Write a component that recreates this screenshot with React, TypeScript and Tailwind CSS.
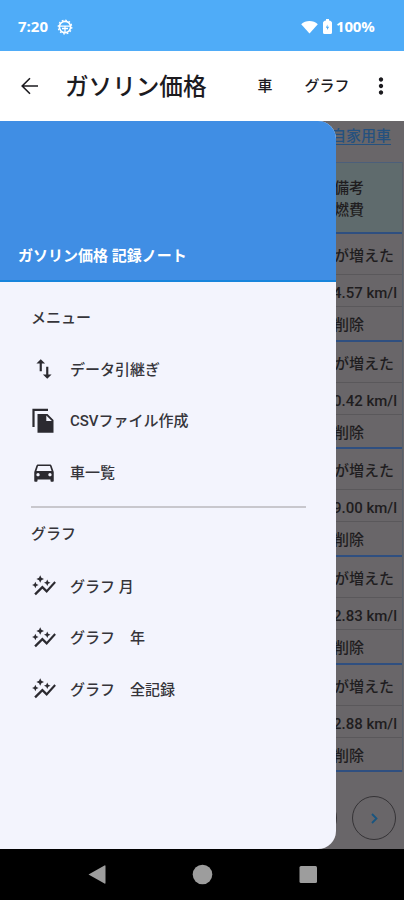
import React from 'react'
import { MdAutoGraph, MdDirectionsCar, MdImportExport, MdMoreVert } from 'react-icons/md'

type MenuItem = { label: string; icon: React.ComponentType<{ className?: string }> }

function CopyIcon({ className }: { className?: string }) {
  return (
    <svg className={className} viewBox="0 0 26 26">
      <path d="M2.500 19V1.800H17" fill="none" stroke="currentColor" strokeWidth="2.200" />
      <path fillRule="evenodd" d="M7 6h9.500l6 6v12.700H6.500V6zM15.300 7.500V13h5.600z" fill="currentColor" />
    </svg>
  )
}

const dataMenu: MenuItem[] = [
  { label: 'データ引継ぎ', icon: MdImportExport },
  { label: 'CSVファイル作成', icon: CopyIcon },
  { label: '車一覧', icon: MdDirectionsCar },
]

const graphMenu: MenuItem[] = [
  { label: 'グラフ 月', icon: MdAutoGraph },
  { label: 'グラフ　年', icon: MdAutoGraph },
  { label: 'グラフ　全記録', icon: MdAutoGraph },
]

const records = ['14.57', '10.42', '19.00', '12.83', '12.88']

function StatusBar() {
  return (
    <div className="h-[51px] shrink-0 bg-[#4facf8] text-white flex items-center pl-[18px] pr-[29px] pt-[2px] font-['Open_Sans','Roboto',sans-serif] font-bold">
      <span className="text-[15px] w-[39px]">7:20</span>
      <svg className="size-4" viewBox="0 0 16 16" fill="none" stroke="currentColor">
        <circle cx="8" cy="8" r="5.600" strokeWidth="1.600" />
        <circle cx="8" cy="8" r="6.800" strokeWidth="1.200" strokeDasharray="1.800 1.760" />
        <path d="M3 7.200h10M8 7v6M5 9.500h6" strokeWidth="1.300" />
      </svg>
      <svg className="ml-auto w-[17px] h-[14px]" viewBox="0 0 17 14" fill="currentColor">
        <path d="M8.500 13.500L.2 4.200C4.500 0 12.500 0 16.800 4.200z" />
      </svg>
      <svg className="ml-[5px] w-[9px] h-[15px]" viewBox="0 0 9 15">
        <path d="M3 0h3v1.500Q9 2 9 4v9.500Q9 15 7.500 15h-6Q0 15 0 13.500V4q0-2 3-2.500z" fill="currentColor" />
        <path d="M4.500 5.500L2.800 8.700h1.200V11l2.200-3.300H4.500z" fill="#4facf8" />
      </svg>
      <span className="ml-[4px] text-[15px] tracking-[-0.200px] w-[39px] whitespace-nowrap">100%</span>
    </div>
  )
}

function AppBar() {
  return (
    <header className="h-[70px] shrink-0 bg-white text-[#1c1b1f] flex items-center">
      <svg className="ml-[20px] size-5" viewBox="0 0 20 20" fill="none" stroke="currentColor" strokeWidth="1.600">
        <path d="M18 10H2.500M10 2.200L2.200 10l7.800 7.800" />
      </svg>
      <h1 className="ml-[25px] pt-[4px] text-[23.600px] font-medium whitespace-nowrap">ガソリン価格</h1>
      <span className="ml-[51px] text-[15px] font-medium pt-px">車</span>
      <span className="ml-[32px] text-[15px] font-medium pt-px">グラフ</span>
      <MdMoreVert className="ml-[18px] size-[26px]" />
    </header>
  )
}

function MenuRow({ label, icon: Icon }: MenuItem) {
  return (
    <li className="h-[51.700px] flex items-center pl-[31px]">
      <Icon className="size-[26px] text-[#2b2a30]" />
      <span className="ml-[13px] pt-[2px] text-[15px] font-medium whitespace-pre">{label}</span>
    </li>
  )
}

function Drawer() {
  return (
    <nav className="absolute left-0 top-0 w-[336px] h-full rounded-r-[18px] overflow-hidden bg-[#f3f4fd] text-[#35343a]">
      <div className="h-[161px] bg-[#408ee4] border-b-2 border-[#1784dc] text-white flex items-end pl-[18px] pb-[13px]">
        <h2 className="text-[15px] leading-[22px] font-bold">ガソリン価格 記録ノート</h2>
      </div>
      <p className="pl-[31px] pt-[24px] h-[61px] text-[15px] leading-6 font-medium">メニュー</p>
      <ul>
        {dataMenu.map((item) => <MenuRow key={item.label} {...item} />)}
      </ul>
      <hr className="ml-[31px] mr-[30px] mt-[8px] border-t-2 border-[#c8c7cd]" />
      <p className="pl-[31px] pt-[14px] h-[52px] text-[15px] leading-6 font-medium">グラフ</p>
      <ul>
        {graphMenu.map((item) => <MenuRow key={item.label} {...item} />)}
      </ul>
    </nav>
  )
}

function RecordTable() {
  return (
    <div className="h-full flex flex-col items-end bg-[#696669] text-[#1f1d20] text-[15px] font-medium">
      <div className="h-[41px] w-full pr-[13px] pt-[4px] text-right text-[#25517f]">
        <span className="underline underline-offset-[3px] decoration-1">自家用車</span>
      </div>
      <div className="w-[120px] mr-[1px] border-r border-[#58606a]">
        <div className="h-[70px] border-t border-[#4c5f7a] bg-[#5f6b6d] pl-[51px] pt-[14px] leading-[22px]">
          <p>備考</p>
          <p>燃費</p>
        </div>
        {records.map((value) => (
          <div key={value} className="h-[107.700px] border-t-2 border-[#2f4f80] whitespace-nowrap">
            <p className="h-[41px] leading-[44px] pl-[51px] border-b border-[#5a585b]">が増えた</p>
            <p className="h-[32px] leading-[36px] pr-[5px] text-right border-b border-[#5a585b]">{value} km/l</p>
            <p className="h-[32px] leading-[36px] pl-[51px]">削除</p>
          </div>
        ))}
        <div className="border-t-2 border-[#2f4f80]" />
      </div>
      <div className="mt-[24px] mr-[8px] flex gap-[15px]">
        <span className="size-[44px] rounded-full border border-[#353336]" />
        <span className="size-[44px] rounded-full border border-[#353336] flex items-center justify-center">
          <svg className="w-[7px] h-[11px]" viewBox="0 0 7 11" fill="none" stroke="#185580" strokeWidth="1.800">
            <path d="M1 1l4.500 4.500L1 10" />
          </svg>
        </span>
      </div>
    </div>
  )
}

function NavBar() {
  return (
    <div className="h-[51px] shrink-0 bg-black">
      <svg className="w-full h-full" viewBox="0 0 404 51" fill="#9d9d9d">
        <path d="M88.500 25.500L104.500 16.500q1-.5 1 .8v16.500q0 1.300-1 .7z" />
        <circle cx="202.500" cy="25.500" r="9.800" />
        <rect x="299.500" y="17" width="17.500" height="17" rx="1.500" />
      </svg>
    </div>
  )
}

export default function App() {
  return (
    <div className="w-[404px] h-[900px] flex flex-col overflow-hidden font-['Roboto','Noto_Sans_CJK_JP',sans-serif]">
      <StatusBar />
      <AppBar />
      <main className="relative h-[728px] shrink-0 overflow-hidden">
        <RecordTable />
        <Drawer />
      </main>
      <NavBar />
    </div>
  )
}
